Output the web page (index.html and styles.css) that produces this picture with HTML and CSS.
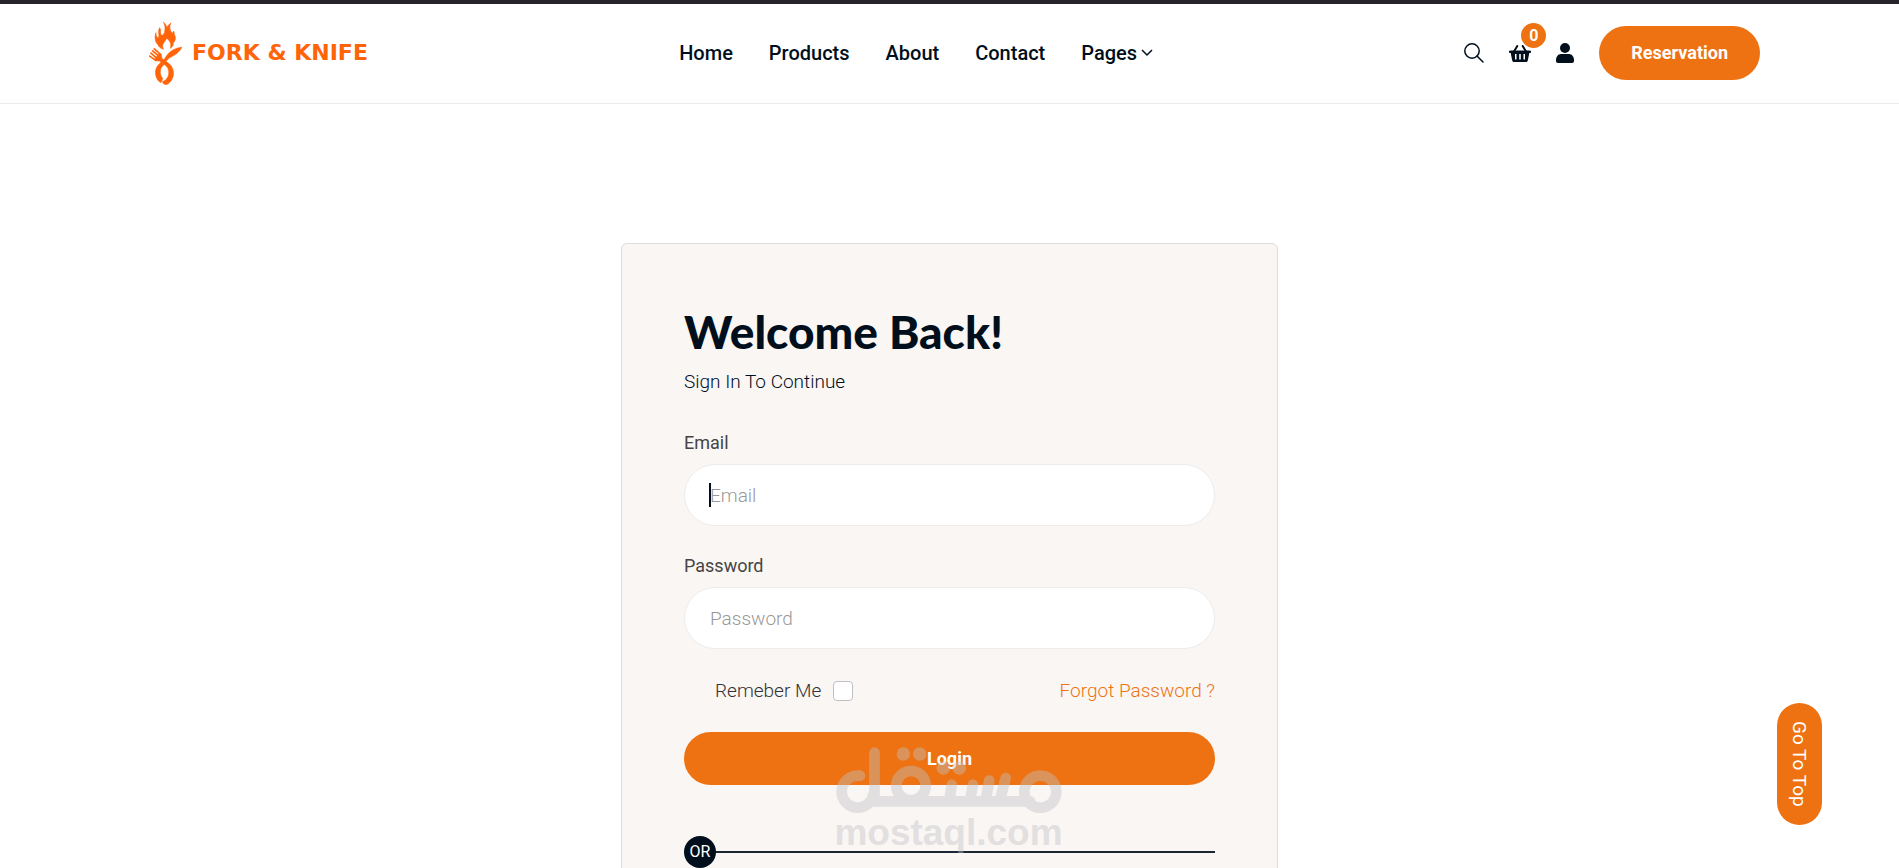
FILE: index.html
```html
<!DOCTYPE html>
<html lang="en">
<head>
<meta charset="utf-8">
<meta name="viewport" content="width=device-width, initial-scale=1">
<title>Fork &amp; Knife - Login</title>
<link rel="stylesheet" href="styles.css">
</head>
<body>
<header class="header">
  <a class="logo" href="#">
    <svg class="logo-mark" viewBox="57 66 100 190" aria-hidden="true">
      <path d="M101 66C107 72 110 77 112 82C114 77 118 72 123 69C118 79 120 88 124 96C127 99 130 100 132 93C134 99 133 104 136 108C138 115 137 124 130 129C132 134 129 140 122 145C125 134 122 126 117 121C114 115 110 114 107 120C106 126 99 129 98 138C98 142 99 145 101 148C94 147 86 141 84 134C76 128 73 112 78 98C78 106 80 112 85 113C91 108 82 96 89 83C95 89 89 99 95 106C100 106 105 100 105 91C107 82 105 73 101 66Z"/>
      <path d="M156 142C149 159 131 168 119 174L108 185L102 181L107 173C119 153 136 145 156 142Z"/>
      <path class="tine" d="M73 147L91 163M68 153L86 168M63 160L80 175M59 169L76 181"/>
      <path d="M94 163L96 176L105 183C118 190 130 201 131 218C132 235 123 251 108 256L100 252L98 246C111 242 118 229 117 216C116 202 107 197 98 190L90 184L76 183L74 178L87 162Z"/>
      <path d="M98 184L106 191C96 199 90 207 91 219C92 230 97 234 99 237C95 241 98 244 93 249C83 245 76 231 77 217C77 203 87 192 98 184Z"/>
    </svg>
    <span class="logo-text">FORK &amp; KNIFE</span>
  </a>
  <nav class="nav">
    <a href="#">Home</a>
    <a href="#">Products</a>
    <a href="#">About</a>
    <a href="#">Contact</a>
    <a class="has-menu" href="#">Pages<svg class="chevron" viewBox="0 0 12 8" aria-hidden="true"><path d="M1 1L6 6L11 1"/></svg></a>
  </nav>
  <div class="actions">
    <button class="icon-btn" type="button" aria-label="Search">
      <svg class="icon-search" viewBox="0 0 20 20" aria-hidden="true"><circle cx="8" cy="8" r="7.2"/><path d="M13 13L19 19"/></svg>
    </button>
    <a class="icon-btn cart" href="#" aria-label="Cart">
      <svg class="icon-basket" viewBox="0 0 22 17" aria-hidden="true">
        <path fill-rule="evenodd" d="M1 5.500H21A1.200 1.200 0 0 1 21 7.900H20.300L18.800 15.500Q18.500 17 17 17H5Q3.500 17 3.200 15.500L1.700 7.900H1A1.200 1.200 0 0 1 1 5.500ZM6 9V14.500H7.500V9ZM10.200 9V14.500H11.800V9ZM14.500 9V14.500H16V9Z"/>
        <path class="handles" d="M8.300 1L5 6.500M13.700 1L17 6.500"/>
      </svg>
      <span class="badge">0</span>
    </a>
    <a class="icon-btn" href="#" aria-label="Account">
      <svg class="icon-user" viewBox="0 0 18 20" aria-hidden="true"><circle cx="9" cy="5" r="5"/><path d="M5 11H13C16 11 18 14 18 17V18C18 19 17 20 16 20H2C1 20 0 19 0 18V17C0 14 2 11 5 11Z"/></svg>
    </a>
    <a class="reserve" href="#">Reservation</a>
  </div>
</header>

<main class="page">
  <section class="card">
    <h1 class="title">Welcome Back!</h1>
    <p class="subtitle">Sign In To Continue</p>
    <form class="form">
      <label class="label" for="email">Email</label>
      <div class="field">
        <input class="input" id="email" type="email" placeholder="Email">
        <span class="caret"></span>
      </div>
      <label class="label" for="password">Password</label>
      <div class="field">
        <input class="input" id="password" type="password" placeholder="Password">
      </div>
      <div class="options">
        <label class="remember" for="remember">Remeber Me <input class="check" id="remember" type="checkbox"></label>
        <a class="forgot" href="#">Forgot Password ?</a>
      </div>
      <button class="login" type="submit">Login</button>
    </form>
    <div class="divider"><span class="or">OR</span></div>
    <div class="watermark">
      <svg class="watermark-mark" viewBox="0 0 226 66" role="img" aria-label="مستقل">
        <circle cx="204.300" cy="44.700" r="16"/>
        <circle cx="75" cy="38.700" r="14.700"/>
        <path d="M24 28.700H21.300A16 16 0 1 0 37.500 47"/>
        <path d="M38.500 5.700V50"/>
        <path d="M36 54.300H194"/>
        <path d="M115.700 37.700L113.500 53M137 37.700L134 53M153.300 33.500L149.700 53M169.700 31L164 53"/>
        <g class="dots"><circle cx="67.300" cy="7" r="6.700"/><circle cx="83.700" cy="7" r="6.700"/><circle cx="107.300" cy="21" r="6.700"/><circle cx="123.300" cy="21" r="6.700"/></g>
      </svg>
      <span class="watermark-text">mostaql.com</span>
    </div>
  </section>
</main>

<button class="to-top" type="button">Go To Top</button>
</body>
</html>
```
FILE: styles.css
```css
:root {
  --orange: #ee7211;
  --ink: #010f1c;
  --cream: #faf6f4;
  scrollbar-width: none;
}

* { box-sizing: border-box; }

body {
  margin: 0;
  background: #fff;
  color: var(--ink);
  font-family: Roboto, "Liberation Sans", sans-serif;
  font-size: 19px;
  line-height: 30px;
}

a { color: inherit; text-decoration: none; }
button { border: 0; font-family: inherit; cursor: pointer; }

.header {
  display: flex;
  align-items: center;
  justify-content: space-between;
  height: 104px;
  padding: 0 139px 1px 149px;
  border-top: 4px solid #27252b;
  border-bottom: 1px solid #ebebeb;
}

.logo {
  display: flex;
  align-items: center;
  gap: 10px;
  color: #ff6409;
}
.logo-mark { width: 33px; height: 63px; fill: currentColor; stroke: currentColor; stroke-width: 2; }
.logo-mark .tine { fill: none; stroke-width: 5; stroke-linecap: round; }
.logo-text { font: bold 22px/30px "DejaVu Sans", sans-serif; }

.nav { display: flex; gap: 36px; font-size: 20px; font-weight: 500; }
.has-menu { display: flex; align-items: center; gap: 4px; }
.chevron { width: 12px; height: 8px; fill: none; stroke: currentColor; stroke-width: 1.5; }

.actions { display: flex; align-items: center; }
.icon-btn {
  display: flex;
  position: relative;
  margin-right: 25px;
  padding: 0;
  background: none;
  color: var(--ink);
}
.icon-btn svg { fill: currentColor; }
.icon-btn .icon-search { width: 20px; height: 20px; fill: none; stroke: currentColor; stroke-width: 1.5; stroke-linecap: round; }
.icon-basket { width: 22px; height: 17px; }
.icon-user { width: 18px; height: 20px; }
.handles { fill: none; stroke: currentColor; stroke-width: 2; stroke-linecap: round; }
.badge {
  position: absolute;
  left: 12px;
  bottom: 14px;
  width: 25px;
  height: 25px;
  border-radius: 50%;
  background: var(--orange);
  color: #fff;
  font-size: 16px;
  font-weight: 700;
  line-height: 25px;
  text-align: center;
}
.reserve {
  padding: 12px 32px;
  border-radius: 27px;
  background: var(--orange);
  color: #fff;
  font-size: 18px;
  font-weight: 700;
}

.page { display: flex; justify-content: center; padding: 139px 24px 0; }
.card {
  position: relative;
  width: 100%;
  max-width: 657px;
  padding: 62px 62px 80px;
  border: 1px solid #dcdcdc;
  border-radius: 6px;
  background: var(--cream);
}
.title {
  margin: 0;
  font: 900 46px/52px Lato, sans-serif;
}
.subtitle { margin: 9px 0 0; font-weight: 300; }

.form { display: flex; flex-direction: column; }
.label {
  margin-top: 31px;
  color: #444;
  font-size: 18px;
}
.field { position: relative; margin-top: 6px; }
.field + .label { margin-top: 25px; }
.input {
  display: block;
  width: 100%;
  height: 62px;
  padding: 0 25px;
  border: 1px solid #ececec;
  border-radius: 31px;
  background: #fff;
  color: var(--ink);
  font: 300 19px/30px Roboto, sans-serif;
}
.input::placeholder { color: #999; opacity: 1; }
.caret {
  position: absolute;
  left: 25px;
  top: 19px;
  width: 2px;
  height: 24px;
  background: var(--ink);
}

.options {
  display: flex;
  align-items: center;
  justify-content: space-between;
  margin-top: 27px;
  font-weight: 300;
}
.remember {
  display: flex;
  align-items: center;
  gap: 12px;
  padding-left: 31px;
  color: #333;
}
.check {
  appearance: none;
  width: 20px;
  height: 20px;
  margin: 0;
  border: 1px solid #bfbfc4;
  border-radius: 4px;
  background: #fff;
}
.forgot { color: var(--orange); }
.login {
  height: 53px;
  margin-top: 26px;
  border-radius: 27px;
  background: var(--orange);
  color: #fff;
  font-size: 18px;
  font-weight: 700;
}

.divider {
  display: flex;
  align-items: center;
  margin-top: 51px;
}
.divider::after { content: ""; flex: 1; height: 2px; background: #1c2733; }
.or {
  width: 32px;
  height: 32px;
  border-radius: 50%;
  background: var(--ink);
  color: #fff;
  font-size: 16px;
  line-height: 32px;
  text-align: center;
}

.watermark {
  position: absolute;
  left: 50%;
  top: 503px;
  display: flex;
  flex-direction: column;
  align-items: center;
  width: 226px;
  margin-left: -114px;
  color: #c1c1c4;
  opacity: 0.42;
  pointer-events: none;
}
.watermark-mark { width: 226px; height: 66px; fill: none; stroke: currentColor; stroke-width: 10.7; stroke-linecap: round; }
.dots { fill: currentColor; stroke: none; }
.watermark-text { font: bold 37px/40px "Liberation Sans", sans-serif; }

.to-top {
  position: fixed;
  right: 77px;
  bottom: 43px;
  width: 45px;
  height: 122px;
  padding: 0;
  border-radius: 23px;
  background: var(--orange);
  color: #fff;
  font-size: 19px;
  line-height: 45px;
  writing-mode: vertical-rl;
}
```
